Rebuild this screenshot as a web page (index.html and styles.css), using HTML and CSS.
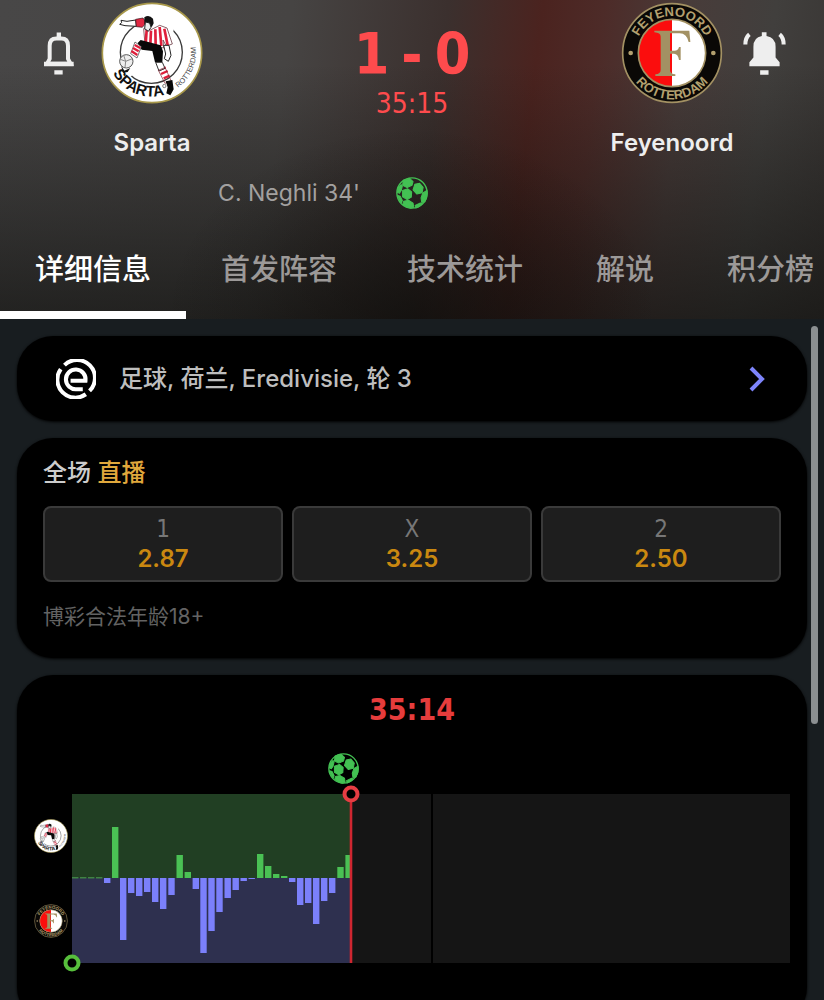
FILE: index.html
```html
<!DOCTYPE html>
<html lang="zh-CN">
<head>
<meta charset="utf-8">
<meta name="viewport" content="width=device-width, initial-scale=1">
<title>Sparta - Feyenoord</title>
<link rel="stylesheet" href="styles.css">
</head>
<body>
<svg class="sprite" aria-hidden="true">
  <defs>
    <symbol id="sparta" viewBox="0 0 306 306">
      <circle cx="153" cy="153" r="149" fill="#fff" stroke="#a8984a" stroke-width="5"/>
      <circle cx="151" cy="151" r="93" fill="none" stroke="#3a3a3a" stroke-width="4"/>
      <path d="M128 52l8 60-14 12-38 42-24 40 24 22 40-34 60-10 20-40 14-60-20-50-40-18z" fill="#fff"/>
      <path d="M104 54l-26 4-18-3 2 7-6 5 16 4 34 2z" fill="#fff" stroke="#222" stroke-width="3"/>
      <path d="M104 52l22-4 10 14-12 14-18-2z" fill="#e12842" stroke="#301018" stroke-width="2"/>
      <path d="M128 80l20 4 28-14 22 8 16 48-18 6-10-18 2 24-56-10z" fill="#fff" stroke="#501520" stroke-width="2"/>
      <path d="M137 84l-3 43M150 86l-2 42M163 82l1 48M176 75l5 57M190 80l10 50" stroke="#df1f3b" stroke-width="8"/>
      <path d="M130 46q14-9 26 4l2 14-6 12-8-12-14 2z" fill="#111"/>
      <path d="M133 60l13 3 4 13-8 12-11-8z" fill="#eee" stroke="#222" stroke-width="3"/>
      <path d="M119 114l60 16 7 18-2 33h-22l-8-34-32-4-12-20z" fill="#080808"/>
      <path d="M188 130l16 0 6 30-8 18-12-8 4-14z" fill="#fff" stroke="#222" stroke-width="3"/>
      <path d="M102 120l19 14-13 34-19-13z" fill="#fff" stroke="#333" stroke-width="2"/>
      <path d="M101 129l17 9M96 138l17 10M91 147l18 12M174 204l20-8M180 216l20-9M188 229l18-8" stroke="#df1f3b" stroke-width="7"/>
      <path d="M164 181l20 0 8 18-18 8z" fill="#fff" stroke="#333" stroke-width="3"/>
      <path d="M172 205l20-9 18 40-18 8z" fill="none" stroke="#802030" stroke-width="2"/>
      <path id="sparta-arc" d="M36 213A131 131 0 0 0 204 273" fill="none"/>
      <text class="crest-sparta"><textPath href="#sparta-arc">SPARTA</textPath></text>
      <path d="M194 238l20-4 4 28-10 18-12-6 4-18z" fill="#080808"/>
      <path d="M60 190l10 16 18-8-8 12-14 2z" fill="#111"/>
      <circle cx="76" cy="178" r="20" fill="#eee" stroke="#555" stroke-width="3"/>
      <path d="M58 172l16 6 20-8M74 178l-2 18M68 160l6 18" fill="none" stroke="#888" stroke-width="3"/>
      <path id="sparta-side" d="M231 257A130 130 0 0 0 284 138" fill="none"/>
      <text class="crest-city"><textPath href="#sparta-side">ROTTERDAM</textPath></text>
      <circle cx="190" cy="252" r="5" fill="none" stroke="#444" stroke-width="2"/>
    </symbol>
    <symbol id="feyenoord" viewBox="0 0 306 306">
      <circle cx="153" cy="153" r="148" fill="#0a0806" stroke="#a39163" stroke-width="5"/>
      <circle cx="153" cy="153" r="101" fill="#fff"/>
      <path d="M153 52a101 101 0 0 0 0 202z" fill="#fb0d0d"/>
      <circle cx="153" cy="153" r="101" fill="none" stroke="#a39163" stroke-width="5"/>
      <circle cx="29" cy="153" r="7" fill="#b3a06f"/>
      <circle cx="277" cy="153" r="7" fill="#b3a06f"/>
      <path d="M100 86H205L208 120H203Q197 94 176 94H147V146H160Q172 146 174 135H179V174H174Q171 155 159 155H147V204Q147 216 163 217V222H103V217Q119 216 119 204V104Q119 92 100 91Z" fill="#a39163"/>
      <path id="fey-top" d="M42 153A111 111 0 0 1 264 153" fill="none"/>
      <path id="fey-bottom" d="M14 153A139 139 0 0 0 292 153" fill="none"/>
      <text class="crest-ring"><textPath href="#fey-top" startOffset="50%">FEYENOORD</textPath></text>
      <text class="crest-ring"><textPath href="#fey-bottom" startOffset="50%">ROTTERDAM</textPath></text>
    </symbol>
    <symbol id="ball" viewBox="14 15 92 92">
      <g fill="#43c153" stroke="#43c153" stroke-width="3" stroke-linejoin="round">
        <path d="M35 24l18-5 10 9-3 11-14 6-13-6z"/>
        <path d="M68 36l14-3 10 12-3 15-15 4-11-12z"/>
        <path d="M33 54l15-5 11 9-1 15-12 7-13-8z"/>
        <path d="M36 85l14-3 13 8 2 12-9 3q-14-3-22-12z"/>
        <path d="M91 61l12-7q3 17-6 32l-9 2-2-13z"/>
        <path d="M21 45l8-8 3 5-3 12-5 8-6-3z"/>
        <path d="M19 68l7 2 6 12-2 7q-8-8-11-21z"/>
        <path d="M69 97l15-7 5 2q-8 9-18 12z"/>
      </g>
      <circle cx="60" cy="61" r="43.500" fill="none" stroke="#43c153" stroke-width="4"/>
    </symbol>
  </defs>
</svg>

<header class="header">
  <div class="match">
    <div class="side">
      <button class="bell" type="button" aria-label="主队提醒">
        <svg width="30" height="43" viewBox="133 95 90 128"><path d="M142 190H213L205 175V136Q205 114 185 114H170Q150 114 150 136V175Z" fill="none" stroke="#eee" stroke-width="12"/><path d="M171 96h13v16h-13zM133 184h89v13h-89zM164 209h25v13h-25z" fill="#eee"/></svg>
      </button>
      <div class="team">
        <svg class="crest" role="img" aria-label="Sparta"><use href="#sparta"/></svg>
        <span class="team-name">Sparta</span>
      </div>
    </div>
    <div class="result">
      <div class="score"><span>1</span><span>-</span><span>0</span></div>
      <div class="clock">35:15</div>
    </div>
    <div class="side side-away">
      <div class="team">
        <svg class="crest" role="img" aria-label="Feyenoord"><use href="#feyenoord"/></svg>
        <span class="team-name">Feyenoord</span>
      </div>
      <button class="bell" type="button" aria-label="客队提醒">
        <svg width="43" height="43" viewBox="581 95 128 128"><path d="M637 96h14v11q27 4 27 32v32l12 14v12h-90v-12l12-14v-32q0-28 25-32zM632 209h25v13h-25z" fill="#eee"/><path d="M600 102Q588 112 588 132M690 102Q702 112 702 132" fill="none" stroke="#eee" stroke-width="12"/></svg>
      </button>
    </div>
  </div>
  <div class="scorers">
    <span class="scorer">C. Neghli 34'</span>
    <svg class="ball" role="img" aria-label="进球"><use href="#ball"/></svg>
  </div>
  <nav class="tabs">
    <a class="tab tab-active" href="#details">详细信息</a>
    <a class="tab" href="#lineups">首发阵容</a>
    <a class="tab" href="#stats">技术统计</a>
    <a class="tab" href="#commentary">解说</a>
    <a class="tab" href="#standings">积分榜</a>
  </nav>
</header>

<main class="content" id="details">
  <a class="card league" href="#league">
    <svg width="40" height="40" viewBox="19 19 118 118" fill="none" stroke="#fff" stroke-width="12" aria-hidden="true"><path d="M44 37A53 53 0 0 1 118 113M33 49A53 53 0 0 0 107 123"/><path d="M62 83H106A29 29 0 1 0 80 108H98"/></svg>
    <span class="league-name">足球, 荷兰, Eredivisie, 轮 3</span>
    <svg width="18" height="26" viewBox="0 0 18 26" fill="none" stroke="#7d84fa" stroke-width="4" aria-hidden="true"><path d="M3 2L14 13L3 24"/></svg>
  </a>

  <section class="card odds">
    <h2 class="odds-title">全场 <span class="live">直播</span></h2>
    <div class="odds-row">
      <button class="odd" type="button"><span>1</span><b>2.87</b></button>
      <button class="odd" type="button"><span>X</span><b>3.25</b></button>
      <button class="odd" type="button"><span>2</span><b>2.50</b></button>
    </div>
    <p class="note">博彩合法年龄18+</p>
  </section>

  <section class="card momentum">
    <div class="momentum-clock">35:14</div>
    <div class="chart">
      <div class="chart-teams">
        <svg class="mini" role="img" aria-label="Sparta"><use href="#sparta"/></svg>
        <svg class="mini" role="img" aria-label="Feyenoord"><use href="#feyenoord"/></svg>
      </div>
      <svg class="plot" viewBox="0 0 718 169" role="img" aria-label="比赛势头">
        <path d="M0 0H718V169H0z" fill="#151515"/>
        <path d="M0 0H279V84H0z" fill="#213f23"/>
        <path d="M0 84H279V169H0z" fill="#2e304f"/>
        <path d="M359 0h2v169h-2z" fill="#000"/>
        <path fill="#4ac154" d="M40 84v-51h6.400v51zM104.500 84v-23h6.400v23zM112.600 84v-6h6.400v6zM185 84v-24h6.400v24zM193 84v-12h6.400v12zM201 84v-4h6.400v4zM209 84v-2h6.400v2zM265.300 84v-11h6.400v11zM273.400 84v-23h5v23z"/>
        <path fill="#3f8244" d="M0 83h6.400v1.500h-6.400zM8 83h6.400v1.500h-6.400zM16 83h6.400v1.500h-6.400zM24 83h6.400v1.500h-6.400z"/>
        <path fill="#7b80fb" d="M32 84h6.400v5h-6.400zM48 84h6.400v62h-6.400zM56 84h6.400v15h-6.400zM64 84h6.400v18h-6.400zM72 84h6.400v14h-6.400zM80 84h6.400v24h-6.400zM88 84h6.400v31h-6.400zM96.300 84h6.400v17h-6.400zM120.600 84h6.400v11h-6.400zM128.300 84h6.400v75h-6.400zM136.300 84h6.400v53h-6.400zM144.300 84h6.400v34h-6.400zM152.500 84h6.400v20h-6.400zM160.500 84h6.400v12h-6.400zM168.500 84h6.400v3h-6.400zM176.500 84h6.400v1h-6.400zM217 84h6.400v4h-6.400zM225 84h6.400v27h-6.400zM233 84h6.400v25h-6.400zM241 84h6.400v46h-6.400zM249 84h6.400v23h-6.400zM257 84h6.400v15h-6.400z"/>
        <path d="M279 0V169" stroke="#ce2630" stroke-width="2.600"/>
        <circle cx="279" cy="0" r="6.500" fill="#000" stroke="#e63d43" stroke-width="4"/>
        <circle cx="0" cy="169" r="6.500" fill="#000" stroke="#57bf3c" stroke-width="4"/>
        <use href="#ball" x="256" y="-41" width="31" height="31"/>
      </svg>
    </div>
  </section>
  <div class="scrollbar"></div>
</main>
</body>
</html>
```
FILE: styles.css
```css
* {
  box-sizing: border-box;
}

body {
  margin: 0;
  background: #181d20;
  color: #ccc;
  font-family: Inter, "Noto Sans CJK SC", sans-serif;
}

a {
  color: inherit;
  text-decoration: none;
}

button {
  border: 0;
  padding: 0;
  background: none;
  color: inherit;
  font: inherit;
}

svg {
  display: block;
}

.sprite {
  position: absolute;
  width: 0;
  height: 0;
}

.header {
  background:
    radial-gradient(ellipse 30% 60% at 50% 100%, rgba(12, 10, 8, 0.5), transparent),
    linear-gradient(to bottom, transparent 20%, rgba(16, 16, 14, 0.68) 100%),
    linear-gradient(97deg, #484747 0%, #464443 34%, #3b302e 52%, #4b231f 63%, #4d2b28 70%, #483c3a 80%, #413f3d 90%, #383533 100%);
}

.match {
  display: grid;
  grid-template-columns: 1fr 1fr 1fr;
}

.side {
  display: flex;
  align-items: flex-start;
  gap: 6px;
  padding: 2px 0 0 36px;
}

.side-away {
  justify-content: flex-end;
  padding: 2px 36px 0 0;
}

.bell {
  display: flex;
  justify-content: center;
  align-items: center;
  width: 46px;
  height: 102px;
}

.team {
  display: flex;
  flex-direction: column;
  align-items: center;
  width: 128px;
}

.crest {
  width: 102px;
  height: 102px;
}

.team-name {
  margin-top: 24px;
  font-size: 24px;
  font-weight: 600;
  line-height: 30px;
  color: #eee;
}

.crest-sparta {
  font: bold 46px "Liberation Sans", sans-serif;
  fill: #111;
}

.crest-city {
  font: 22px "Liberation Sans", sans-serif;
  fill: #444;
}

.crest-ring {
  font: bold 39px "Liberation Sans", sans-serif;
  fill: #b3a06f;
  text-anchor: middle;
}

.result {
  display: flex;
  flex-direction: column;
  align-items: center;
  padding-top: 24px;
  color: #fe4b4d;
}

.score {
  display: flex;
  gap: 12px;
  font: bold 57px/60px "DejaVu Sans Condensed", "DejaVu Sans", sans-serif;
}

.clock {
  font: 28px/40px "DejaVu Sans Condensed", "DejaVu Sans", sans-serif;
}

.scorers {
  display: grid;
  grid-template-columns: 1fr 32px 1fr;
  align-items: center;
  padding: 18px 0 10px;
}

.scorer {
  padding-right: 36px;
  font-size: 23px;
  line-height: 34px;
  text-align: right;
  color: #a3a1a0;
}

.ball {
  width: 32px;
  height: 32px;
}

.tabs {
  display: flex;
  overflow: hidden;
}

.tab {
  flex: none;
  min-width: 134px;
  padding: 30px 35px 21px;
  border-bottom: 8px solid transparent;
  font-size: 29px;
  font-weight: 500;
  line-height: 40px;
  text-align: center;
  color: #9c9998;
}

.tab-active {
  border-color: #fff;
  color: #fff;
}

.content {
  position: relative;
  display: flex;
  flex-direction: column;
  gap: 17px;
  padding: 17px 17px 0;
}

.card {
  border-radius: 36px;
  background: #000;
  box-shadow: 0 1px 3px #000;
}

.league {
  display: flex;
  align-items: center;
  gap: 23px;
  padding: 21px 41px 20px 39px;
}

.league-name {
  flex: 1;
  font-size: 24px;
  font-weight: 500;
  line-height: 44px;
  color: #bebebe;
}

.odds {
  padding: 18px 26px 24px;
}

.odds-title {
  margin: 0;
  font-size: 24px;
  font-weight: 500;
  line-height: 34px;
}

.live {
  color: #e0a83c;
}

.odds-row {
  display: grid;
  grid-template-columns: repeat(3, 1fr);
  gap: 9px;
  margin-top: 16px;
}

.odd {
  display: flex;
  flex-direction: column;
  align-items: center;
  padding: 6px 0;
  border: 2px solid #3a3a3a;
  border-radius: 8px;
  background: #1e1e1e;
  font: 24px/30px "DejaVu Sans Condensed", "DejaVu Sans", sans-serif;
  color: #777;
}

.odd b {
  font-family: Inter, sans-serif;
  font-weight: 600;
  color: #ca8810;
}

.note {
  margin: 18px 0 0;
  font-size: 21px;
  line-height: 34px;
  color: #636363;
}

.momentum {
  padding: 16px 17px 60px;
}

.momentum-clock {
  font: bold 30px/38px "DejaVu Sans Condensed", "DejaVu Sans", sans-serif;
  text-align: center;
  color: #e63c3c;
}

.chart {
  display: flex;
  gap: 4px;
  margin-top: 65px;
}

.chart-teams {
  display: flex;
  flex-direction: column;
  justify-content: space-around;
}

.mini {
  width: 34px;
  height: 34px;
}

.plot {
  flex: 1;
  min-width: 0;
  overflow: visible;
}

.scrollbar {
  position: absolute;
  top: 7px;
  right: 6px;
  width: 7px;
  height: 398px;
  border-radius: 4px;
  background: #8b8f91;
}
```
